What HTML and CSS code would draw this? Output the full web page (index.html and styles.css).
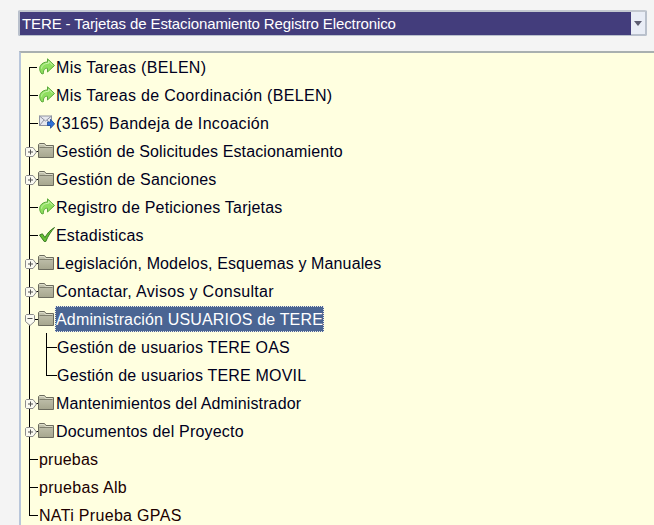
FILE: index.html
```html
<!DOCTYPE html>
<html lang="es">
<head>
<meta charset="utf-8">
<title>TERE</title>
<link rel="stylesheet" href="styles.css">
</head>
<body>
<svg class="defs" width="0" height="0" aria-hidden="true">
  <defs>
    <linearGradient id="g-folder" x1="0" y1="0" x2="0" y2="1">
      <stop offset="0" stop-color="#c6c6b2"/>
      <stop offset="1" stop-color="#a6a68e"/>
    </linearGradient>
  </defs>
  <symbol id="i-arrow" viewBox="0 0 16 17">
    <path d="M3 16C0.5 13.5 0 10 1.5 7.5C3 5 5.8 4 8.5 4V0.8L15.5 7.5L8.5 14V10.3C6 10 4 11.8 4.5 15.5Z" fill="#8fdf5f" stroke="#5aa83a" stroke-width="1" stroke-linejoin="round"/>
    <path d="M2.5 10.5C2.8 7.5 5.5 5.3 9.6 5.3V3.2L13.8 7.4" fill="none" stroke="#ccf5ae" stroke-width="1"/>
  </symbol>
  <symbol id="i-check" viewBox="0 0 16 16">
    <path d="M0.5 8.5L3.4 7.3L6 11C8.2 7 11 3.6 15.5 1C12 5 9 9.5 6.8 15H5.2Z" fill="#66c034" stroke="#2f6e1c" stroke-width="0.9" stroke-linejoin="round"/>
  </symbol>
  <symbol id="i-mail" viewBox="0 0 16 16">
    <rect x="0.5" y="1.5" width="12" height="9.5" fill="#e6e8ee" stroke="#8f93a2"/>
    <path d="M0.5 1.5L6.5 6.5L12.5 1.5M0.5 11L5 5.5M12.5 11L8 5.5" fill="none" stroke="#8f93a2"/>
    <path d="M8.5 7.5H11.5V4.8L15.7 9.3L11.5 13.8V11H8.5Z" fill="#2f72d8" stroke="#1d4a96" stroke-width="0.8"/>
  </symbol>
  <symbol id="i-folder" viewBox="0 0 16 15">
    <path d="M0.5 14.5V1.5L1.5 0.5H6.5L8 2.5H15.5V14.5Z" fill="url(#g-folder)" stroke="#6c6c5e"/>
    <path d="M1.5 1.5H6L7.5 3.5H14.5" stroke="#dedecb" fill="none"/>
    <path d="M1.5 4.5H14.5" stroke="#7f7f6e" fill="none"/>
  </symbol>
  <symbol id="i-plus" viewBox="0 0 12 10">
    <path d="M0.5 1.5L1.5 0.5H8L11.5 5L8 9.5H1.5L0.5 8.5Z" fill="#fbfbf2" stroke="#8d8d8d"/>
    <path d="M3 5H8M5.5 2.5V7.5" stroke="#555" fill="none"/>
  </symbol>
  <symbol id="i-minus" viewBox="0 0 10 12">
    <path d="M0.5 1.5L1.5 0.5H8.5L9.5 1.5V7.5L5 11.5L0.5 7.5Z" fill="#fbfbf2" stroke="#8d8d8d"/>
    <path d="M2.5 4.5H7.5" stroke="#555" fill="none"/>
  </symbol>
</svg>

<div class="select">
  <div class="select-value">TERE - Tarjetas de Estacionamiento Registro Electronico</div>
  <div class="select-button"><span class="select-arrow"></span></div>
</div>

<div class="tree">
  <div class="row first"><span class="conn"></span><svg class="icon"><use href="#i-arrow"/></svg><span class="label wide">Mis Tareas (BELEN)</span></div>
  <div class="row"><span class="conn"></span><svg class="icon"><use href="#i-arrow"/></svg><span class="label wide">Mis Tareas de Coordinación (BELEN)</span></div>
  <div class="row"><span class="conn"></span><svg class="icon"><use href="#i-mail"/></svg><span class="label wide">(3165) Bandeja de Incoación</span></div>
  <div class="row"><span class="conn"><svg class="toggle"><use href="#i-plus"/></svg></span><svg class="icon folder"><use href="#i-folder"/></svg><span class="label narrow">Gestión de Solicitudes Estacionamiento</span></div>
  <div class="row"><span class="conn"><svg class="toggle"><use href="#i-plus"/></svg></span><svg class="icon folder"><use href="#i-folder"/></svg><span class="label">Gestión de Sanciones</span></div>
  <div class="row"><span class="conn"></span><svg class="icon"><use href="#i-arrow"/></svg><span class="label">Registro de Peticiones Tarjetas</span></div>
  <div class="row"><span class="conn"></span><svg class="icon"><use href="#i-check"/></svg><span class="label">Estadisticas</span></div>
  <div class="row"><span class="conn"><svg class="toggle"><use href="#i-plus"/></svg></span><svg class="icon folder"><use href="#i-folder"/></svg><span class="label narrow">Legislación, Modelos, Esquemas y Manuales</span></div>
  <div class="row"><span class="conn"><svg class="toggle"><use href="#i-plus"/></svg></span><svg class="icon folder"><use href="#i-folder"/></svg><span class="label wide">Contactar, Avisos y Consultar</span></div>
  <div class="row"><span class="conn"><svg class="toggle open"><use href="#i-minus"/></svg></span><svg class="icon folder"><use href="#i-folder"/></svg><span class="label selected">Administración USUARIOS de TERE</span></div>
  <div class="children">
    <div class="row child"><span class="conn"></span><span class="label">Gestión de usuarios TERE OAS</span></div>
    <div class="row child last"><span class="conn"></span><span class="label">Gestión de usuarios TERE MOVIL</span></div>
  </div>
  <div class="row"><span class="conn"><svg class="toggle"><use href="#i-plus"/></svg></span><svg class="icon folder"><use href="#i-folder"/></svg><span class="label narrow">Mantenimientos del Administrador</span></div>
  <div class="row"><span class="conn"><svg class="toggle"><use href="#i-plus"/></svg></span><svg class="icon folder"><use href="#i-folder"/></svg><span class="label">Documentos del Proyecto</span></div>
  <div class="row"><span class="conn"></span><span class="label leaf">pruebas</span></div>
  <div class="row"><span class="conn"></span><span class="label leaf wide">pruebas Alb</span></div>
  <div class="row last"><span class="conn"></span><span class="label leaf wide">NATi Prueba GPAS</span></div>
</div>
</body>
</html>
```

FILE: styles.css
```css
html, body {
  margin: 0;
  height: 100%;
  overflow: hidden;
}

body {
  background: #f4f4f4;
  font-family: "Liberation Sans", Arial, sans-serif;
  font-size: 16px;
  color: #000;
  padding: 10px 7px 0 18px;
  box-sizing: border-box;
}

.defs {
  position: absolute;
}

.select {
  display: flex;
  height: 26px;
  box-sizing: border-box;
  border: 2px solid #b9c0cc;
  border-top-color: #c3c8d0;
  border-radius: 2px;
  background: #e9edf6;
}

.select-value {
  flex: 1;
  background: #433d7c;
  color: #fff;
  font-size: 15px;
  letter-spacing: -0.11px;
  padding-left: 2px;
  line-height: 24px;
  height: 23px;
  overflow: hidden;
  white-space: nowrap;
}

.select-button {
  width: 14px;
  display: flex;
  align-items: center;
  justify-content: center;
}

.select-arrow {
  width: 0;
  height: 0;
  border-left: 4px solid transparent;
  border-right: 4px solid transparent;
  border-top: 5px solid #5c5c70;
}

.tree {
  margin: 15px -8px 0 1px;
  height: 480px;
  box-sizing: border-box;
  background: #ffffe0;
  border-top: 2px solid #a9b0b0;
  border-left: 2px solid #b9c6da;
  padding: 0 0 0 8px;
  overflow: hidden;
}

.row {
  position: relative;
  display: flex;
  align-items: center;
  height: 28px;
  white-space: nowrap;
}

.conn {
  position: relative;
  flex: none;
  align-self: stretch;
  width: 9px;
  border-left: 1px solid #000;
  box-sizing: border-box;
}

.conn::after {
  content: "";
  position: absolute;
  left: 0;
  top: 14px;
  width: 8px;
  height: 1px;
  background: #000;
}

.row.first .conn {
  border-left: 0;
  margin-top: 14px;
  background: linear-gradient(#000, #000) left top / 1px 100% no-repeat;
}

.row.first .conn::after {
  top: 0;
}

.row.last .conn {
  align-self: flex-start;
  height: 15px;
}

.toggle {
  position: absolute;
  left: -5px;
  top: 10px;
  width: 12px;
  height: 10px;
  z-index: 1;
}

.toggle.open {
  left: -5px;
  top: 9px;
  width: 10px;
  height: 12px;
}

.icon {
  flex: none;
  width: 16px;
  height: 17px;
  margin-left: 1px;
  margin-top: -1px;
}

.icon.folder {
  height: 15px;
  margin-left: 0;
  margin-top: -1px;
  margin-right: 1px;
}

.label {
  letter-spacing: 0.2px;
  padding: 1px 1px 0;
  line-height: 25px;
  color: #000020;
}

.label.narrow {
  letter-spacing: 0.13px;
}

.label.wide {
  letter-spacing: 0.32px;
}

.label.leaf {
  padding-left: 1px;
  color: #200000;
}

.label.selected {
  background: #4a6593;
  color: #fff;
  letter-spacing: 0.16px;
  outline: 1px dotted #e8e8e8;
  outline-offset: -1px;
}

.children {
  position: relative;
  border-left: 1px solid #000;
}

.row.child {
  margin-left: 16px;
}

.row.child .conn {
  width: 10px;
}

.row.child .conn::after {
  width: 10px;
}
```
